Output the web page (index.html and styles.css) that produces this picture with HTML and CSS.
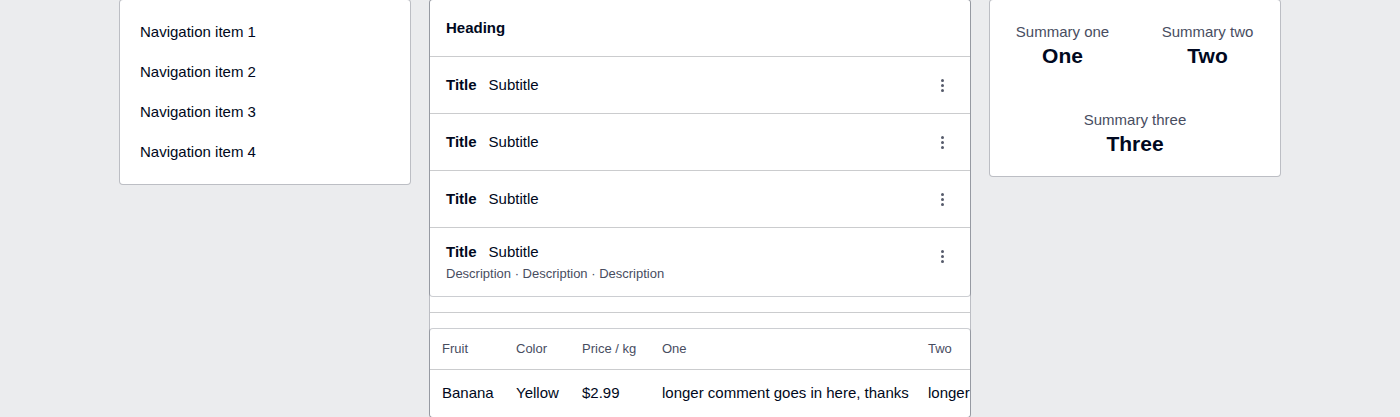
FILE: index.html
```html
<!DOCTYPE html>
<html lang="en">
<head>
<meta charset="utf-8">
<meta name="viewport" content="width=device-width, initial-scale=1">
<title>Columns</title>
<link rel="stylesheet" href="styles.css">
</head>
<body>
<svg class="sprite" width="0" height="0" aria-hidden="true">
  <symbol id="dots" viewBox="0 0 15 15">
    <circle cx="7.5" cy="2.5" r="1.5"/><circle cx="7.5" cy="7.5" r="1.5"/><circle cx="7.5" cy="12.5" r="1.5"/>
  </symbol>
</svg>
<div class="layout">
  <nav class="card nav">
    <a class="nav-item" href="#1">Navigation item 1</a>
    <a class="nav-item" href="#2">Navigation item 2</a>
    <a class="nav-item" href="#3">Navigation item 3</a>
    <a class="nav-item" href="#4">Navigation item 4</a>
  </nav>
  <main class="card main">
    <section class="card list">
      <h2 class="list-heading">Heading</h2>
      <div class="list-row">
        <div class="list-text"><strong>Title</strong><span>Subtitle</span></div>
        <button class="more" type="button" aria-label="More"><svg class="more-icon"><use href="#dots"/></svg></button>
      </div>
      <div class="list-row">
        <div class="list-text"><strong>Title</strong><span>Subtitle</span></div>
        <button class="more" type="button" aria-label="More"><svg class="more-icon"><use href="#dots"/></svg></button>
      </div>
      <div class="list-row">
        <div class="list-text"><strong>Title</strong><span>Subtitle</span></div>
        <button class="more" type="button" aria-label="More"><svg class="more-icon"><use href="#dots"/></svg></button>
      </div>
      <div class="list-row">
        <div class="list-body">
          <div class="list-text"><strong>Title</strong><span>Subtitle</span></div>
          <p class="description">Description · Description · Description</p>
        </div>
        <button class="more" type="button" aria-label="More"><svg class="more-icon"><use href="#dots"/></svg></button>
      </div>
    </section>
    <hr class="divider">
    <section class="card table-card">
      <table class="table">
        <colgroup>
          <col class="col-fruit"><col class="col-color"><col class="col-price"><col class="col-comment"><col>
        </colgroup>
        <thead>
          <tr><th>Fruit</th><th>Color</th><th>Price / kg</th><th>One</th><th>Two</th></tr>
        </thead>
        <tbody>
          <tr><td>Banana</td><td>Yellow</td><td>$2.99</td><td>longer comment goes in here, thanks</td><td>longer</td></tr>
        </tbody>
      </table>
    </section>
  </main>
  <dl class="card summary">
    <div class="summary-item"><dt>Summary one</dt><dd>One</dd></div>
    <div class="summary-item"><dt>Summary two</dt><dd>Two</dd></div>
    <div class="summary-item"><dt>Summary three</dt><dd>Three</dd></div>
  </dl>
</div>
</body>
</html>
```

FILE: styles.css
```css
:root {
  --ink: #000820;
  --muted: #484d5f;
  --line: #cbccce;
  --outline: rgba(0, 8, 31, 0.2);
}

* {
  box-sizing: border-box;
}

body {
  margin: 0;
  background: #ebecee;
  color: var(--ink);
  font: 15px/24px "Liberation Sans", Arial, sans-serif;
}

.sprite {
  position: absolute;
}

.layout {
  display: grid;
  grid-template-columns: 290px minmax(0, 1fr) 290px;
  gap: 20px;
  align-items: start;
  max-width: 1160px;
  margin: 0 auto;
}

.card {
  background: #fff;
  border-radius: 3px;
  box-shadow: 0 0 0 1px var(--outline);
}

.nav {
  display: flex;
  flex-direction: column;
  padding: 12px 0;
}

.nav-item {
  padding: 8px 20px;
  color: inherit;
  text-decoration: none;
}

.list-heading {
  margin: 0;
  padding: 16px;
  font-size: 15px;
  line-height: 24px;
}

.list-row {
  display: flex;
  align-items: flex-start;
  justify-content: space-between;
  padding: 16px;
  border-top: 1px solid var(--line);
}

.list-row:has(.description) {
  padding: 12px 16px;
}

.list-text {
  display: flex;
  gap: 12px;
}

.description {
  margin: 0;
  color: var(--muted);
  font-size: 13px;
  line-height: 20px;
}

.more {
  display: flex;
  align-items: center;
  justify-content: center;
  width: 23px;
  height: 24px;
  padding: 0;
  border: 0;
  background: none;
  color: #565b6b;
  cursor: pointer;
}

.list-body + .more {
  height: 32px;
}

.more-icon {
  width: 15px;
  height: 15px;
  fill: currentColor;
}

.divider {
  height: 1px;
  margin: 16px 0;
  border: 0;
  background: var(--line);
}

.table-card {
  overflow-x: auto;
  scrollbar-width: none;
}

.table {
  width: 100%;
  min-width: 540px;
  border-collapse: collapse;
  table-layout: fixed;
  white-space: nowrap;
}

.col-fruit {
  width: 74px;
}

.col-color {
  width: 66px;
}

.col-price {
  width: 80px;
}

.col-comment {
  width: 266px;
}

.table th {
  padding: 10px 0 10px 12px;
  border-bottom: 1px solid var(--line);
  color: var(--muted);
  font-size: 13px;
  font-weight: 400;
  line-height: 20px;
  text-align: left;
}

.table td {
  padding: 11px 0 12px 12px;
}

.summary {
  display: flex;
  flex-wrap: wrap;
  margin: 0;
}

.summary-item {
  flex: 1 1 140px;
  padding: 20px;
  text-align: center;
}

.summary-item dt {
  color: var(--muted);
}

.summary-item dd {
  margin: 0;
  font-size: 21px;
  font-weight: 700;
}
```
